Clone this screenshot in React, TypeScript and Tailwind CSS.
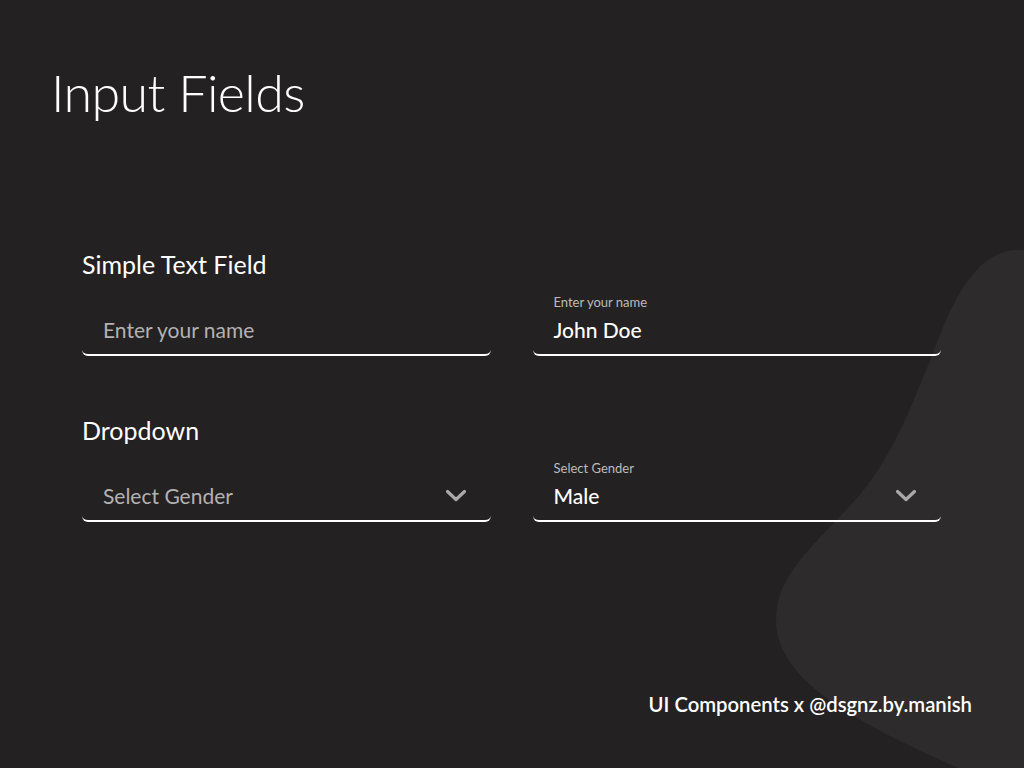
import React from 'react';

const font = { fontFamily: 'Lato, "Noto Sans", sans-serif' };

function Chevron() {
  return (
    <svg width="22" height="14" viewBox="0 0 22 14" fill="none" className="shrink-0">
      <path d="M2.5 2.5 L11 10.5 L19.5 2.5" stroke="#a9a9a9" strokeWidth="3.2" strokeLinecap="round" strokeLinejoin="round" />
    </svg>
  );
}

interface FieldProps {
  label?: string;
  value: string;
  filled?: boolean;
  dropdown?: boolean;
}

function Field({ label, value, filled, dropdown }: FieldProps) {
  return (
    <div className="h-[68px] border-b-2 border-white rounded-b-[6px] flex flex-col justify-end pl-[21px] pr-[24px] pb-[12px]">
      {label && <div className="text-[13px] leading-none text-[#bdbbbc] mb-[9px]">{label}</div>}
      <div className="flex items-center justify-between">
        <span className={filled ? 'text-[21px] leading-[24px] text-white font-medium' : 'text-[21px] leading-[24px] text-[#b3b1b2]'}>
          {value}
        </span>
        {dropdown && <Chevron />}
      </div>
    </div>
  );
}

export default function App() {
  return (
    <div className="relative w-[1024px] h-[768px] overflow-hidden bg-[#242122]" style={font}>
      <svg className="absolute inset-0 pointer-events-none" width="1024" height="768" viewBox="0 0 1024 768">
        <path
          d="M1024 250 C990 246 966 276 946 320 C922 378 900 446 862 492 C822 540 776 570 776 620 C776 682 860 724 958 768 L1024 768 Z"
          fill="#2d2b2c"
        />
      </svg>

      <div className="relative flex flex-col h-full">
        <h1 className="pl-[51px] pt-[66px] text-[52px] leading-none font-light text-white tracking-[-0.6px]">
          Input Fields
        </h1>

        <div className="pl-[82px] pr-[83px] mt-[134px] flex flex-col">
          <h2 className="text-[25px] leading-none text-white">Simple Text Field</h2>
          <div className="grid grid-cols-2 gap-[42px] mt-[11px]">
            <Field value="Enter your name" />
            <Field label="Enter your name" value="John Doe" filled />
          </div>

          <h2 className="text-[25px] leading-none text-white mt-[62px]">Dropdown</h2>
          <div className="grid grid-cols-2 gap-[42px] mt-[11px]">
            <Field value="Select Gender" dropdown />
            <Field label="Select Gender" value="Male" filled dropdown />
          </div>
        </div>

        <div className="mt-auto pb-[54px] pr-[52px] flex justify-end">
          <span className="text-[20.3px] leading-none font-semibold text-white">UI Components x @dsgnz.by.manish</span>
        </div>
      </div>
    </div>
  );
}
